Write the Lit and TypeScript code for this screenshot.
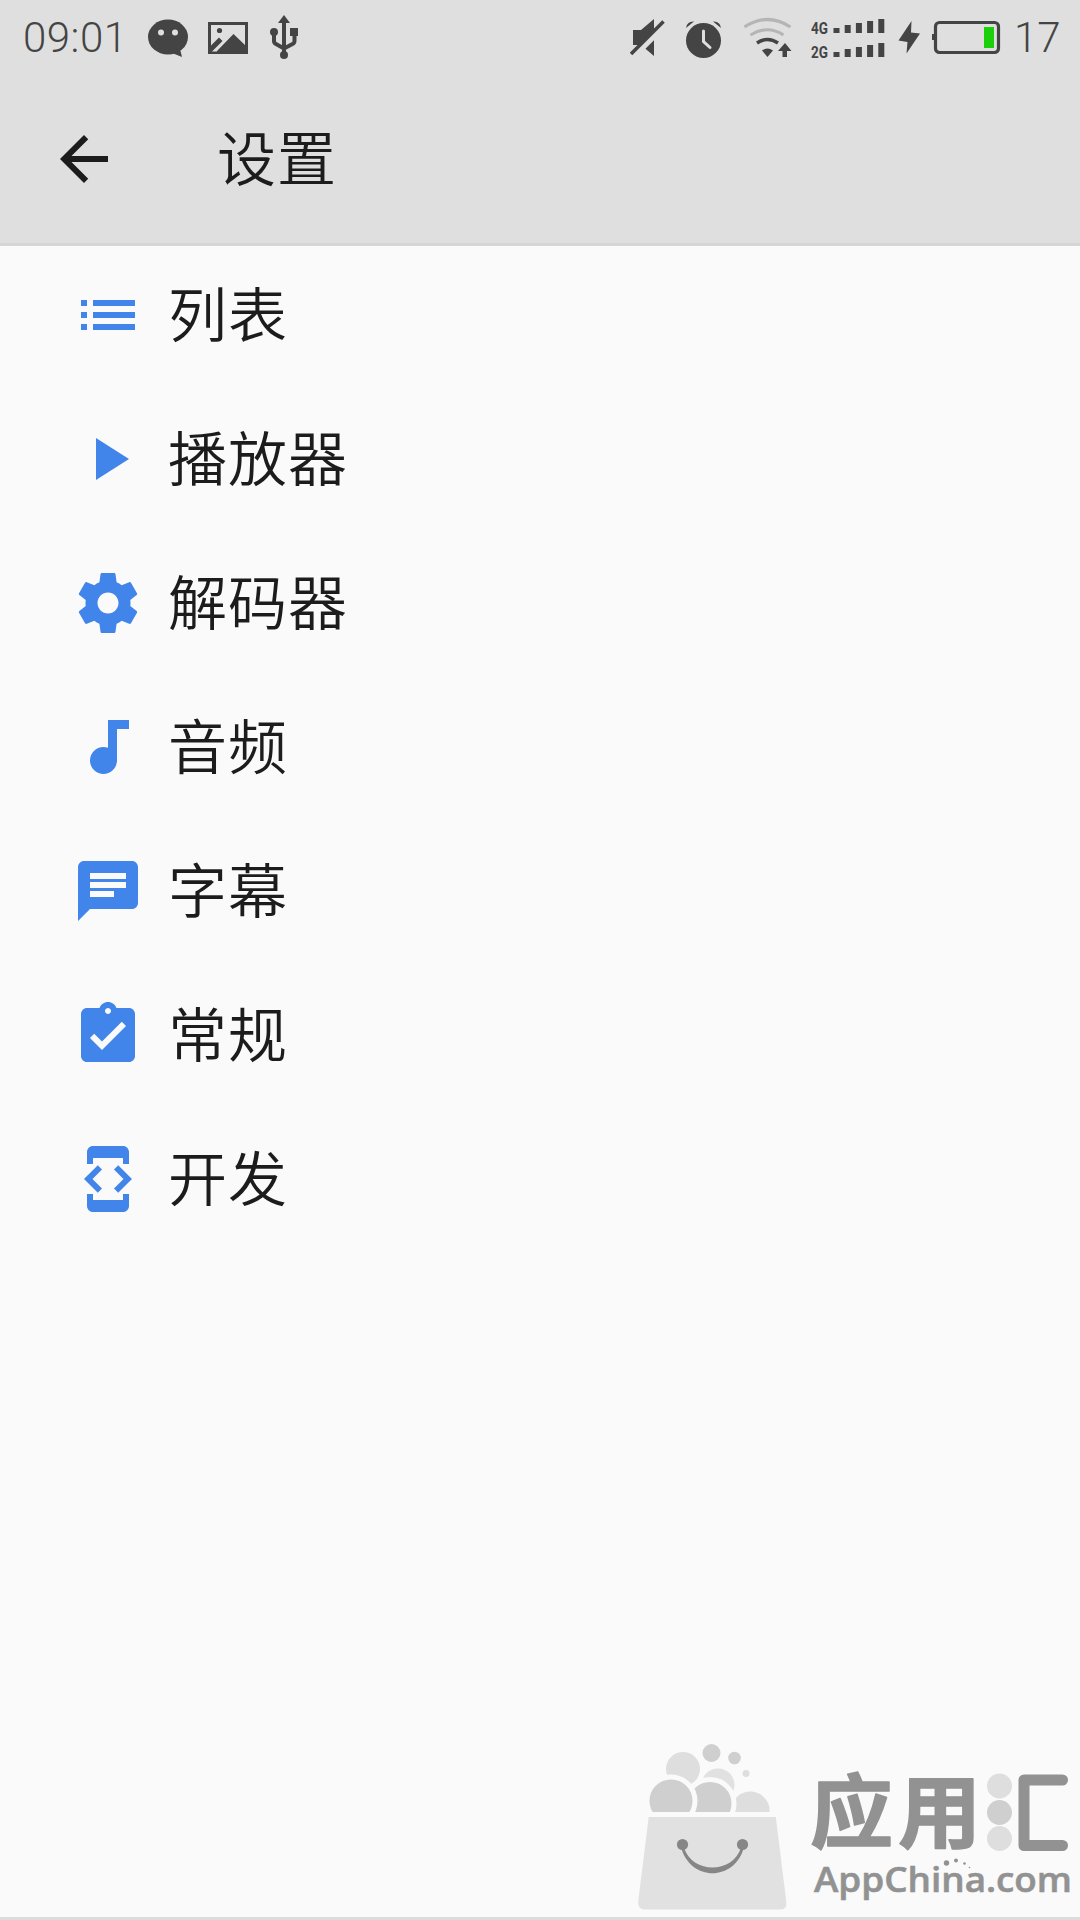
import { LitElement, html, css, svg } from "lit";
import { customElement, property } from "lit/decorators.js";

const ICONS: Record<string, string> = {
  back: "M20 11H7.83l5.59-5.59L12 4l-8 8 8 8 1.41-1.41L7.83 13H20v-2z",
  list: "M3 13h2v-2H3v2zm0 4h2v-2H3v2zm0-8h2V7H3v2zm4 4h14v-2H7v2zm0 4h14v-2H7v2zM7 7v2h14V7H7z",
  play: "M8 5v14l11-7z",
  gear: "M19.43 12.98c.04-.32.07-.64.07-.98s-.03-.66-.07-.98l2.11-1.65c.19-.15.24-.42.12-.64l-2-3.46c-.12-.22-.39-.3-.61-.22l-2.49 1c-.52-.4-1.08-.73-1.69-.98l-.38-2.65C14.46 2.18 14.25 2 14 2h-4c-.25 0-.46.18-.49.42l-.38 2.65c-.61.25-1.17.59-1.69.98l-2.49-1c-.23-.09-.49 0-.61.22l-2 3.46c-.13.22-.07.49.12.64l2.11 1.65c-.04.32-.07.65-.07.98s.03.66.07.98l-2.11 1.65c-.19.15-.24.42-.12.64l2 3.46c.12.22.39.3.61.22l2.49-1c.52.4 1.08.73 1.69.98l.38 2.65c.03.24.24.42.49.42h4c.25 0 .46-.18.49-.42l.38-2.65c.61-.25 1.17-.59 1.69-.98l2.49 1c.23.09.49 0 .61-.22l2-3.46c.12-.22.07-.49-.12-.64l-2.11-1.65zM12 15.5c-1.93 0-3.5-1.57-3.5-3.5s1.57-3.5 3.5-3.5 3.5 1.57 3.5 3.5-1.57 3.5-3.5 3.5z",
  audio: "M12 3v9.28c-.47-.17-.97-.28-1.5-.28C8.01 12 6 14.01 6 16.5S8.01 21 10.5 21c2.31 0 4.2-1.75 4.45-4H15V6h4V3h-7z",
  chat: "M20 2H4c-1.1 0-1.99.9-1.99 2L2 22l4-4h14c1.1 0 2-.9 2-2V4c0-1.1-.9-2-2-2zM6 9h12v2H6V9zm8 5H6v-2h8v2zm4-6H6V6h12v2z",
  clipboard: "M19 3h-4.18C14.4 1.84 13.3 1 12 1c-1.3 0-2.4.84-2.82 2H5c-1.1 0-2 .9-2 2v14c0 1.1.9 2 2 2h14c1.1 0 2-.9 2-2V5c0-1.1-.9-2-2-2zm-7 0c.55 0 1 .45 1 1s-.45 1-1 1-1-.45-1-1 .45-1 1-1zm-2 14l-4-4 1.41-1.41L10 14.17l6.59-6.59L18 9l-8 8z",
  developer: "M7 5h10v2h2V3c0-1.1-.9-1.99-2-1.99L7 1c-1.1 0-2 .9-2 2v4h2V5zm8.41 11.59L20 12l-4.59-4.59L14 8.83 17.17 12 14 15.17l1.41 1.42zM10 15.17L6.83 12 10 8.83 8.59 7.41 4 12l4.59 4.59L10 15.17zM17 19H7v-2H5v4c0 1.1.9 2 2 2h10c1.1 0 2-.9 2-2v-4h-2v2z",
};

const ITEMS = [
  { icon: "list", label: "列表" },
  { icon: "play", label: "播放器" },
  { icon: "gear", label: "解码器" },
  { icon: "audio", label: "音频" },
  { icon: "chat", label: "字幕" },
  { icon: "clipboard", label: "常规" },
  { icon: "developer", label: "开发" },
];

const SIGNAL = [
  { label: "4G", base: 33 },
  { label: "2G", base: 57 },
];
const BAR_HEIGHTS = [5, 8, 10, 12, 14];

@customElement("app-icon")
export class AppIcon extends LitElement {
  @property() name = "";
  static styles = css`
    :host { display: block; width: 72px; height: 72px; flex: none; }
    svg { display: block; width: 100%; height: 100%; fill: currentColor; }
  `;
  render() {
    return html`<svg viewBox="0 0 24 24"><path d=${ICONS[this.name] ?? ""}></path></svg>`;
  }
}

@customElement("status-bar")
export class StatusBar extends LitElement {
  static styles = css`
    :host {
      display: flex; justify-content: space-between; height: 75px; padding: 0 18px 0 23px;
      color: #444; font: 300 42px/75px Roboto, sans-serif;
    }
    .group { display: flex; }
    svg { display: block; flex: none; height: 75px; fill: #444; }
    .line { fill: none; stroke: #444; }
    .faint { stroke: #b5b5b5; }
    .light { fill: #dfdfdf; }
    .cut { fill: none; stroke: #dfdfdf; }
    .charge { fill: #1bcf0c; }
    .net { font: 700 16px Roboto, sans-serif; }
    .time { width: 105px; margin-right: 20px; letter-spacing: 0.5px; }
    .picture { margin-left: 20px; }
    .usb { margin-left: 20px; }
    .alarm { margin-left: 19px; }
    .wifi { margin-left: 20px; }
    .signal { margin-left: 18px; }
    .bolt { margin-left: 12px; }
    .battery { margin-left: 11px; }
    .percent { margin-left: 13px; width: 48px; }
  `;
  render() {
    return html`
      <div class="group">
        <span class="time">09:01</span>
        <svg width="40" viewBox="148 0 40 75">
          <ellipse cx="168" cy="37" rx="20" ry="17.5"></ellipse>
          <path d="M172 53 L182 57 L180 49z"></path>
          <circle class="light" cx="161" cy="32.5" r="3"></circle>
          <circle class="light" cx="175" cy="32.5" r="3"></circle>
        </svg>
        <svg class="picture" width="40" viewBox="208 0 40 75">
          <path fill-rule="evenodd" d="M208 22h40v32h-40z M211 25v26.500h34v-26.500z"></path>
          <path d="M210 46.500L219 37.500l3.500 3.500L211 52.500h-1z M217 53V51L233.500 34 246 46v7z"></path>
          <circle cx="219.500" cy="30.500" r="2.600"></circle>
        </svg>
        <svg class="usb" width="32" viewBox="268 0 32 75">
          <path d="M284 15l6 8h-12z M290 28h8v8h-8z"></path>
          <path class="line" stroke-width="4" d="M284 22v33M274 33v8q0 2 2 3l8 4.500M294.500 33v8q0 2-2 3l-8.500 4.500"></path>
          <circle cx="274" cy="32" r="4"></circle>
          <circle cx="284" cy="55" r="4"></circle>
        </svg>
      </div>
      <div class="group">
        <svg width="36" viewBox="630 0 36 75">
          <path d="M633 30h8l13-11v37L641 45h-8z"></path>
          <path class="cut" stroke-width="6" d="M631.500 58.500l36-36"></path>
          <path class="line" stroke-width="3.500" d="M631 54l32.500-32.500"></path>
        </svg>
        <svg class="alarm" width="38" viewBox="685 0 38 75">
          <circle cx="703.500" cy="40.500" r="17.500"></circle>
          <path d="M686 28q1-7 8-6.500z M721 28q-1-7-8-6.500z"></path>
          <path class="cut" stroke-width="3" stroke-linecap="round" d="M703.500 31v10.500l6.500 6"></path>
        </svg>
        <svg class="wifi" width="50" viewBox="743 0 50 75">
          <path class="line faint" stroke-width="3.200" d="M744.500 27q23-15 46 0M750.500 35q17-10.500 33 0"></path>
          <path class="line" stroke-width="3.500" d="M757 43q10.500-7 21 0"></path>
          <path d="M762 50.500q5.500-4 11 0L767.500 57z M785 43l6.500 8h-4.500v6h-4.500v-6H778z"></path>
        </svg>
        <svg class="signal" width="75" viewBox="811 0 75 75">
          ${SIGNAL.map((s) => svg`
            <text class="net" x="811" y=${s.base + 0.5} textLength="17" lengthAdjust="spacingAndGlyphs">${s.label}</text>
            ${BAR_HEIGHTS.map((h, i) => svg`<rect x=${833.5 + i * 11.2} y=${s.base - h} width="6" height=${h}></rect>`)}
          `)}
        </svg>
        <svg class="bolt" width="22" viewBox="898 0 22 75">
          <path d="M911.500 21L898.500 40.500l9 1.500-1 11.500L920 33.500l-9-1z"></path>
        </svg>
        <svg class="battery" width="70" viewBox="931 0 70 75">
          <rect class="line" stroke-width="3.200" x="935.500" y="22.500" width="63" height="30" rx="4"></rect>
          <rect x="932" y="34" width="3" height="6"></rect>
          <rect class="charge" x="984" y="27" width="10" height="21"></rect>
        </svg>
        <span class="percent">17</span>
      </div>
    `;
  }
}

@customElement("store-mark")
export class StoreMark extends LitElement {
  static styles = css`
    :host { display: block; width: 450px; height: 180px; }
    svg { display: block; width: 450px; height: 180px; }
    .ring { stroke: #fafafa; stroke-width: 5; }
    .b1 { fill: #dedede; }
    .b2 { fill: #cfcfcf; }
    .b3 { fill: #e1e1e1; }
    .ink { fill: #929292; }
    .smile { fill: #868686; }
    .cn { font: 700 80px "Noto Sans CJK SC", sans-serif; fill: #929292; stroke: #929292; stroke-width: 1.500; stroke-linejoin: round; }
    .en { font: 600 35px "Open Sans", sans-serif; fill: #929292; stroke: #929292; stroke-width: 0.600; }
    .frame { fill: none; stroke: #929292; stroke-width: 11; stroke-linecap: round; stroke-linejoin: round; }
  `;
  render() {
    return html`
      <svg viewBox="630 1735 450 180">
        <circle class="b1" cx="683" cy="1769" r="17"></circle>
        <circle class="b2" cx="711.500" cy="1753" r="9"></circle>
        <circle class="b2" cx="734.500" cy="1758" r="6.300"></circle>
        <circle class="b1" cx="746" cy="1773.500" r="3.500"></circle>
        <circle class="b3" cx="718" cy="1785" r="16.500"></circle>
        <path class="b1" d="M731 1815V1808a19.500 19.500 0 0 1 38.500 0v7z"></path>
        <circle class="b2 ring" cx="710" cy="1803.500" r="24"></circle>
        <circle class="b2 ring" cx="671" cy="1801" r="24"></circle>
        <path class="b3 ring" d="M646.500 1814.500H778L788.500 1899q2 13-8 13H646q-12 0-10-13z"></path>
        <circle class="smile" cx="682.500" cy="1844.500" r="5.600"></circle>
        <circle class="smile" cx="742.500" cy="1844.500" r="5.600"></circle>
        <path class="smile" d="M681 1847C690 1882 735 1882 744 1847L741 1848C732 1874 693 1874 684 1848z"></path>
        <text class="cn" x="810" y="1841" textLength="83" lengthAdjust="spacingAndGlyphs">应</text>
        <text class="cn" x="898" y="1841" textLength="83" lengthAdjust="spacingAndGlyphs">用</text>
        <circle class="b1" cx="999.500" cy="1786" r="12.500"></circle>
        <circle class="b2" cx="999.500" cy="1812.500" r="12.500"></circle>
        <circle class="b1" cx="999.500" cy="1838.500" r="12.500"></circle>
        <path class="frame" d="M1062.500 1780H1024v65.500H1062.500"></path>
        <text class="en" x="814" y="1892" textLength="258" lengthAdjust="spacingAndGlyphs">AppChina.com</text>
        <circle class="ink" cx="946.500" cy="1863" r="2.700"></circle>
        <circle class="ink" cx="956" cy="1860.500" r="2"></circle>
        <circle class="ink" cx="964.500" cy="1863.500" r="1.300"></circle>
        <circle class="ink" cx="969.500" cy="1867.500" r="0.800"></circle>
      </svg>
    `;
  }
}

@customElement("app-root")
export class AppRoot extends LitElement {
  static styles = css`
    :host {
      display: flex; flex-direction: column; position: relative; box-sizing: border-box;
      width: 1080px; height: 1920px; overflow: hidden; background: #fafafa;
      border-bottom: 3px solid #dcdcdc; color: #1c1c1c;
      font: 350 59px/138px "Noto Sans CJK SC DemiLight", "Noto Sans CJK SC", sans-serif;
    }
    .header { box-sizing: border-box; height: 246px; background: #dfdfdf; border-bottom: 3px solid #d6d6d6; }
    .toolbar { display: flex; align-items: center; gap: 97px; height: 168px; padding-left: 48px; }
    .title { letter-spacing: 1px; padding-bottom: 6px; }
    .items { display: flex; flex-direction: column; margin-top: -3px; }
    .item { display: flex; align-items: center; gap: 24px; height: 144px; padding-left: 72px; letter-spacing: 1px; }
    .item app-icon { color: #4285ea; }
    .label { padding-bottom: 6px; }
    .mark { position: absolute; right: 0; bottom: 2px; }
  `;
  render() {
    return html`
      <div class="header">
        <status-bar></status-bar>
        <div class="toolbar">
          <app-icon name="back"></app-icon>
          <span class="title">设置</span>
        </div>
      </div>
      <div class="items">
        ${ITEMS.map((i) => html`<div class="item"><app-icon name=${i.icon}></app-icon><span class="label">${i.label}</span></div>`)}
      </div>
      <store-mark class="mark"></store-mark>
    `;
  }
}
